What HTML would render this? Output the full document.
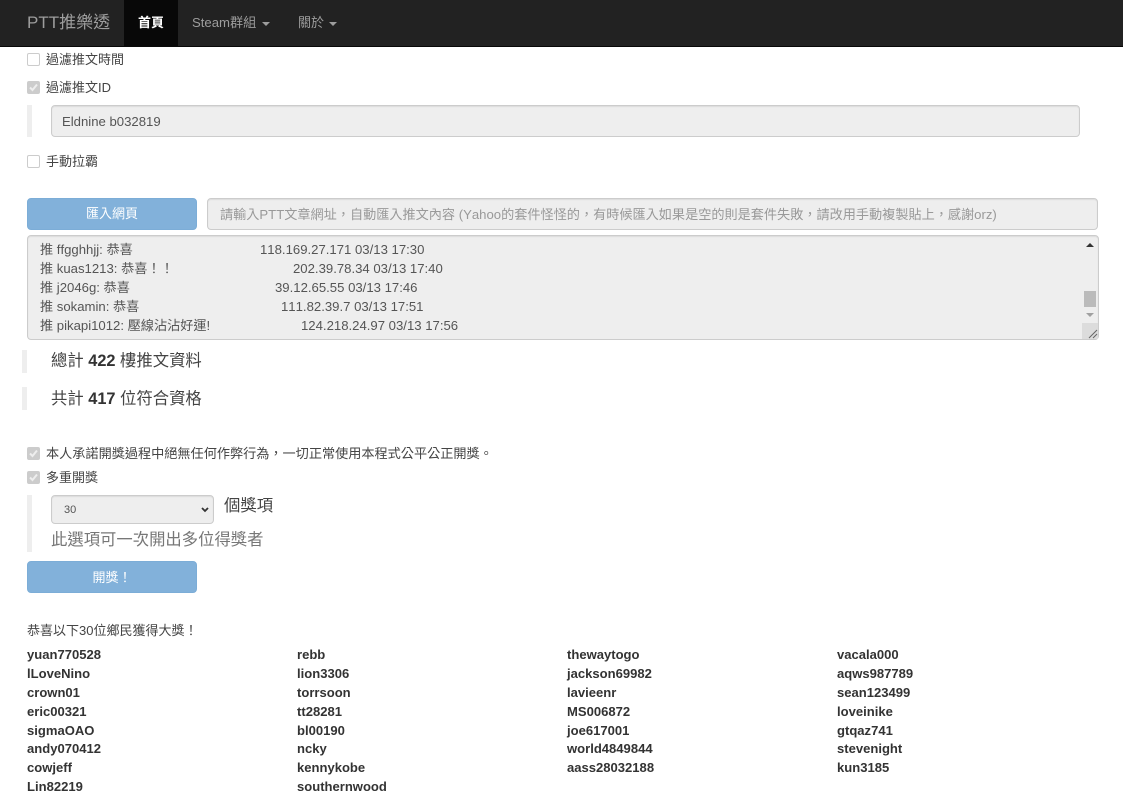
<!DOCTYPE html>
<html lang="zh-Hant"><head><meta charset="utf-8"><title>PTT推樂透</title>
<style>
*{box-sizing:border-box}
html,body{margin:0;padding:0;width:1123px;height:800px;overflow:hidden;background:#fff}
body{position:relative;font-family:"Liberation Sans","Noto Sans CJK TC",sans-serif;font-size:13.15px;color:#444;font-kerning:none}
.a{position:absolute;white-space:pre}
nav{position:absolute;left:0;top:0;width:1123px;height:47px;background:#222;border-bottom:1px solid #080808}
.cb{position:absolute;left:27px;width:13px;height:13px;border:1px solid #ccc;border-radius:2px;background:#fff}
.cb.on{background:#ccc;border-color:#ccc}
.cb.on svg{position:absolute;left:0;top:0}
.bar{position:absolute;background:#eee;width:5px}
.in{position:absolute;background:#eee;border:1px solid #ccc;border-radius:4px;box-shadow:inset 0 1px 1px rgba(0,0,0,.075)}
.btn{position:absolute;left:27px;width:170px;height:32px;background:#82b1da;border:1px solid #7cadd7;border-radius:4px;color:#fff;text-align:center;font-size:13px;line-height:30px}
.caret{display:inline-block;width:0;height:0;margin-left:2px;vertical-align:middle;border-top:4px solid #9d9d9d;border-left:4px solid transparent;border-right:4px solid transparent}
.n{position:absolute;font-weight:bold;font-size:13.05px;line-height:19px;color:#333;white-space:pre}
.h{font-size:16.35px;line-height:23px;color:#444}
.h b{color:#333}
</style></head><body>
<nav>
<div class="a" style="left:27px;top:12px;font-size:17px;line-height:22px;color:#9d9d9d">PTT推樂透</div>
<div style="position:absolute;left:124px;top:0;width:54px;height:46px;background:#080808"></div>
<div class="a" style="left:138px;top:14px;line-height:18px;color:#fff;font-size:13px;font-weight:bold">首頁</div>
<div class="a" style="left:192px;top:14px;line-height:18px;color:#9d9d9d;font-size:13.15px">Steam群組 <span class="caret"></span></div>
<div class="a" style="left:298px;top:14px;line-height:18px;color:#9d9d9d;font-size:13px">關於 <span class="caret" style="margin-left:1px"></span></div>
</nav>

<div class="cb" style="top:53px"></div>
<div class="a" style="left:46px;top:51px;line-height:18px;font-size:13px">過濾推文時間</div>
<div class="cb on" style="top:81px"><svg width="11" height="11" viewBox="0 0 11 11"><path d="M2 5.5L4.5 8L9 2.5" stroke="#eee" stroke-width="2" fill="none"/></svg></div>
<div class="a" style="left:46px;top:79px;line-height:18px;font-size:13px">過濾推文ID</div>
<div class="bar" style="left:27px;top:105px;height:32px"></div>
<div class="in" style="left:51px;top:105px;width:1029px;height:32px"></div>
<div class="a" style="left:62px;top:113px;line-height:18px;color:#555">Eldnine b032819</div>
<div class="cb" style="top:155px"></div>
<div class="a" style="left:46px;top:153px;line-height:18px;font-size:13px">手動拉霸</div>

<div class="btn" style="top:198px">匯入網頁</div>
<div class="in" style="left:207px;top:198px;width:891px;height:32px"></div>
<div class="a" style="left:220px;top:206px;line-height:18px;color:#999">請輸入PTT文章網址，自動匯入推文內容 (Yahoo的套件怪怪的，有時候匯入如果是空的則是套件失敗，請改用手動複製貼上，感謝orz)</div>

<div class="in" style="left:27px;top:235px;width:1072px;height:105px"></div>
<div class="a" style="left:40px;top:240px;line-height:19px;color:#555">推 ffgghhjj: 恭喜</div><div class="a" style="left:260px;top:240px;line-height:19px;color:#555">118.169.27.171 03/13 17:30</div>
<div class="a" style="left:40px;top:259px;line-height:19px;color:#555">推 kuas1213: 恭喜！！</div><div class="a" style="left:293px;top:259px;line-height:19px;color:#555">202.39.78.34 03/13 17:40</div>
<div class="a" style="left:40px;top:278px;line-height:19px;color:#555">推 j2046g: 恭喜</div><div class="a" style="left:275px;top:278px;line-height:19px;color:#555">39.12.65.55 03/13 17:46</div>
<div class="a" style="left:40px;top:297px;line-height:19px;color:#555">推 sokamin: 恭喜</div><div class="a" style="left:281px;top:297px;line-height:19px;color:#555">111.82.39.7 03/13 17:51</div>
<div class="a" style="left:40px;top:316px;line-height:19px;color:#555">推 pikapi1012: 壓線沾沾好運!</div><div class="a" style="left:301px;top:316px;line-height:19px;color:#555">124.218.24.97 03/13 17:56</div>
<svg style="position:absolute;left:1082px;top:236px" width="16" height="103" viewBox="0 0 16 103">
<path d="M8 7L12 11H4Z" fill="#333"/>
<rect x="2" y="55" width="12" height="16" fill="#bbb"/>
<path d="M4 77H12L8 81Z" fill="#a0a0a0"/>
<rect x="0" y="87" width="16" height="16" fill="#dcdcdc"/>
<path d="M7 102L15 94M11 102L15 98" stroke="#666" stroke-width="1"/>
</svg>

<div class="bar" style="left:22px;top:350px;height:23px"></div>
<div class="a h" style="left:51px;top:350px">總計 <b>422</b> 樓推文資料</div>
<div class="bar" style="left:22px;top:387px;height:23px"></div>
<div class="a h" style="left:51px;top:388px">共計 <b>417</b> 位符合資格</div>

<div class="cb on" style="top:447px"><svg width="11" height="11" viewBox="0 0 11 11"><path d="M2 5.5L4.5 8L9 2.5" stroke="#eee" stroke-width="2" fill="none"/></svg></div>
<div class="a" style="left:46px;top:445px;line-height:18px">本人承諾開獎過程中絕無任何作弊行為，一切正常使用本程式公平公正開獎。</div>
<div class="cb on" style="top:471px"><svg width="11" height="11" viewBox="0 0 11 11"><path d="M2 5.5L4.5 8L9 2.5" stroke="#eee" stroke-width="2" fill="none"/></svg></div>
<div class="a" style="left:46px;top:469px;line-height:18px;font-size:13px">多重開獎</div>
<div class="bar" style="left:27px;top:495px;height:57px"></div>
<div class="in" style="left:51px;top:495px;width:163px;height:29px"></div>
<div class="a" style="left:64px;top:501px;line-height:18px;font-size:11px;color:#555">30</div>
<svg style="position:absolute;left:201px;top:507px" width="8" height="6" viewBox="0 0 8 6"><path d="M1 1L4 4L7 1" stroke="#333" stroke-width="1.8" fill="none"/></svg>
<div class="a h" style="left:224px;top:495px">個獎項</div>
<div class="a h" style="left:51px;top:529px;color:#777">此選項可一次開出多位得獎者</div>
<div class="btn" style="top:561px;height:32px;line-height:31px">開獎！</div>

<div class="a" style="left:27px;top:622px;line-height:18px;font-size:13px">恭喜以下30位鄉民獲得大獎！</div>

<div class="n" style="left:27px;top:645px">yuan770528</div>
<div class="n" style="left:27px;top:664px">lLoveNino</div>
<div class="n" style="left:27px;top:683px">crown01</div>
<div class="n" style="left:27px;top:702px">eric00321</div>
<div class="n" style="left:27px;top:721px">sigmaOAO</div>
<div class="n" style="left:27px;top:739px">andy070412</div>
<div class="n" style="left:27px;top:758px">cowjeff</div>
<div class="n" style="left:27px;top:777px">Lin82219</div>

<div class="n" style="left:297px;top:645px">rebb</div>
<div class="n" style="left:297px;top:664px">lion3306</div>
<div class="n" style="left:297px;top:683px">torrsoon</div>
<div class="n" style="left:297px;top:702px">tt28281</div>
<div class="n" style="left:297px;top:721px">bl00190</div>
<div class="n" style="left:297px;top:739px">ncky</div>
<div class="n" style="left:297px;top:758px">kennykobe</div>
<div class="n" style="left:297px;top:777px">southernwood</div>

<div class="n" style="left:567px;top:645px">thewaytogo</div>
<div class="n" style="left:567px;top:664px">jackson69982</div>
<div class="n" style="left:567px;top:683px">lavieenr</div>
<div class="n" style="left:567px;top:702px">MS006872</div>
<div class="n" style="left:567px;top:721px">joe617001</div>
<div class="n" style="left:567px;top:739px">world4849844</div>
<div class="n" style="left:567px;top:758px">aass28032188</div>

<div class="n" style="left:837px;top:645px">vacala000</div>
<div class="n" style="left:837px;top:664px">aqws987789</div>
<div class="n" style="left:837px;top:683px">sean123499</div>
<div class="n" style="left:837px;top:702px">loveinike</div>
<div class="n" style="left:837px;top:721px">gtqaz741</div>
<div class="n" style="left:837px;top:739px">stevenight</div>
<div class="n" style="left:837px;top:758px">kun3185</div>
</body></html>
